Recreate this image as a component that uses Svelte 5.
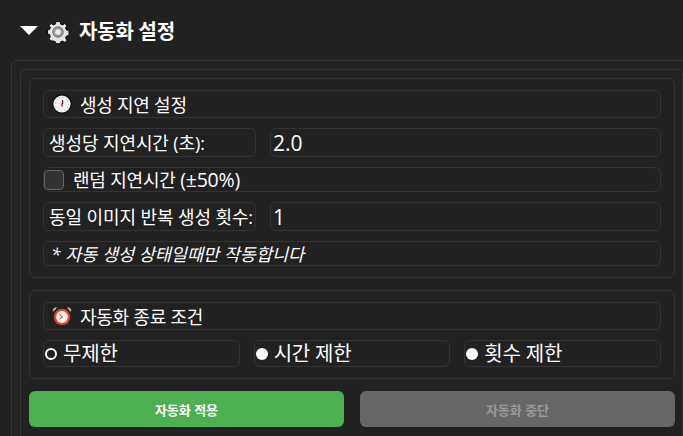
<script>
  let delay = '2.0';
  let repeat = '1';
  let randomDelay = false;
  let limit = 'none';
</script>

<div class="page">
  <header class="head">
    <span class="arrow"></span>
    <svg class="gear" width="22" height="22" viewBox="0 0 22 22">
      <path d="M9 .5h4l.6 2.600 1.900.8L17.800 2.500l2.200 2.200-1.400 2.300.8 1.900 2.600.6v5l-2.600.6-.8 1.900 1.400 2.300-2.200 2.200-2.300-1.400-1.900.8-.6 2.100H9l-.6-2.100-1.900-.8L4.200 20 2 17.800l1.400-2.300-.8-1.900L.5 13V9l2.100-.6.8-1.900L2 4.700l2.200-2.200 2.300 1.400 1.900-.8z" fill="#e4e4e4" stroke="#0c0c0c" stroke-width="1"/>
      <circle cx="11" cy="11" r="5.200" fill="#9a9a9a" stroke="#6d6d6d" stroke-width="1"/>
      <circle cx="11" cy="11" r="2.800" fill="#ececec"/>
    </svg>
    <h2>자동화 설정</h2>
  </header>

  <div class="outer">
    <div class="inner">
      <section class="group">
        <div class="row title">
          <svg width="20" height="20" viewBox="0 0 20 20">
            <circle cx="10" cy="10" r="10" fill="#0e0e0e"/>
            <circle cx="10" cy="10" r="8.600" fill="#f3f3f3"/>
            <circle cx="10" cy="10" r="6.600" fill="none" stroke="#aaa" stroke-width="1" stroke-dasharray="1 2.500"/>
            <path d="M10.600 6v4" stroke="#333" stroke-width="1.300"/>
            <path d="M10 9.500v3" stroke="#e01b24" stroke-width="1.600"/>
          </svg>
          <span>생성 지연 설정</span>
        </div>

        <div class="pair">
          <label class="row field" for="delay">생성당 지연시간 (초):</label>
          <input id="delay" class="row" bind:value={delay} />
        </div>

        <label class="row check">
          <input type="checkbox" bind:checked={randomDelay} />
          <span>랜덤 지연시간 <span class="latin">(±50%)</span></span>
        </label>

        <div class="pair">
          <label class="row field" for="repeat">동일 이미지 반복 생성 횟수:</label>
          <input id="repeat" class="row" bind:value={repeat} />
        </div>

        <div class="row note">* 자동 생성 상태일때만 작동합니다</div>
      </section>

      <section class="group">
        <div class="row title">
          <svg width="20" height="20" viewBox="0 0 20 20">
            <path d="M1 6.500 5.500 1.500 3 1 .5 3.500zM19 6.500 14.500 1.500 17 1l2.500 2.500z" fill="#b5b5b5" stroke="#222" stroke-width=".6"/>
            <path d="M4 18l2-2M16 18l-2-2" stroke="#444" stroke-width="1.600"/>
            <circle cx="10" cy="11" r="8.200" fill="#e2472c"/>
            <circle cx="10" cy="11" r="5.900" fill="#f7efe9"/>
            <path d="M7.500 8.500 10.500 11 7.500 13" fill="none" stroke="#555" stroke-width="1"/>
          </svg>
          <span>자동화 종료 조건</span>
        </div>

        <div class="radios">
          <label class="row radio"><input type="radio" bind:group={limit} value="none" /><span>무제한</span></label>
          <label class="row radio"><input type="radio" bind:group={limit} value="time" /><span>시간 제한</span></label>
          <label class="row radio"><input type="radio" bind:group={limit} value="count" /><span>횟수 제한</span></label>
        </div>
      </section>

      <div class="actions">
        <button class="apply">자동화 적용</button>
        <button class="stop" disabled>자동화 중단</button>
      </div>
    </div>
  </div>
</div>

<style>
  :global(body) { background: #212121; overflow: hidden; }
  .page { height: 436px; overflow: hidden; color: #fff; font-family: "Open Sans", "Noto Sans CJK KR", sans-serif; }

  .head { height: 60px; padding: 3px 0 0 20px; box-sizing: border-box; display: flex; align-items: center; }
  .arrow { width: 0; height: 0; border-left: 9px solid transparent; border-right: 9px solid transparent; border-top: 9px solid #fff; margin: -2px 10px 0 0; }
  .gear { margin-right: 10px; margin-left: -1px; }
  h2 { margin: 0; font-size: 20px; font-weight: 700; line-height: 24px; letter-spacing: -0.2px; }

  .outer { width: 680px; height: 400px; margin-left: 11px; padding: 8px; box-sizing: border-box; border: 1px solid #333; border-radius: 6px; }
  .inner { width: 663px; height: 400px; box-sizing: border-box; padding: 8px 7px 8px 8px; border: 1px solid #333; border-radius: 6px; display: flex; flex-direction: column; gap: 12px; }

  .group { border: 1px solid #333; border-radius: 6px; padding: 11px 13px; display: flex; flex-direction: column; gap: 10px; }

  .row { box-sizing: border-box; border: 1px solid #333; border-radius: 6px; display: flex; align-items: center; background: #212121; color: #fff; font-family: inherit; line-height: 24px; }

  .title { height: 28px; padding: 1px 0 0 8px; gap: 8px; font-size: 18px; letter-spacing: -0.25px; }
  .title svg { margin-top: -1px; }
  .pair { display: grid; grid-template-columns: 213px 1fr; gap: 14px; }
  .field { height: 29px; padding-left: 5px; font-size: 18px; white-space: nowrap; letter-spacing: -0.1px; }
  input.row { height: 29px; width: 100%; padding: 0 0 0 2px; font-size: 21px; outline: none; }

  .check { height: 25px; font-size: 18px; gap: 9px; letter-spacing: -0.2px; }
  .check input { appearance: none; margin: 0; width: 20px; height: 20px; box-sizing: border-box; border: 1px solid #666; border-radius: 4px; background: #333; }
  .latin { font-size: 19.500px; }

  .note { height: 25px; padding-left: 7px; font-size: 17.500px; font-style: italic; }

  .radios { display: grid; grid-template-columns: repeat(3, 1fr); gap: 14px; }
  .radio { height: 27px; font-size: 20px; gap: 6px; padding-left: 0; letter-spacing: -0.2px; }
  .radio input { appearance: none; margin: 0 0 0 1px; width: 12px; height: 12px; box-sizing: border-box; border-radius: 50%; background: #fff; }
  .radio input:checked { background: #212121; border: 2.500px solid #fff; }

  .actions { display: grid; grid-template-columns: 1fr 1fr; gap: 16px; }
  button { height: 36px; border: none; border-radius: 6px; font-family: inherit; font-size: 13px; font-weight: 700; padding: 0; }
  .apply { background: #4caf50; color: #fff; }
  .stop { background: #666; color: #999; }
</style>
